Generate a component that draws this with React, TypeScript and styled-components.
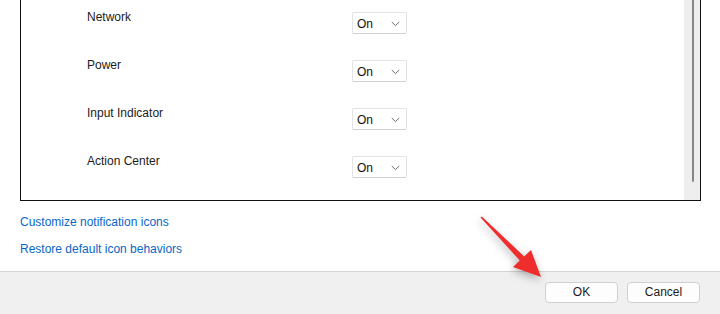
import React from "react";
import styled, { createGlobalStyle } from "styled-components";

const Global = createGlobalStyle`
  html, body { margin: 0; padding: 0; background: #ffffff; }
  body { font-family: "Liberation Sans", Arial, sans-serif; font-size: 12px; color: #1b1b1b; }
  * { box-sizing: border-box; }
`;

const Page = styled.div`
  position: relative;
  width: 720px;
  height: 314px;
  display: flex;
  flex-direction: column;
  overflow: hidden;
`;

const ListBox = styled.div`
  margin-left: 20px;
  width: 681px;
  height: 201px;
  border: 1px solid #111111;
  border-top: none;
  display: flex;
`;

const ListContent = styled.div`
  flex: 1;
  display: flex;
  flex-direction: column;
`;

const Row = styled.div`
  height: 48px;
  display: grid;
  grid-template-columns: 265px 55px;
  align-items: start;
  padding-left: 66px;
`;

const Label = styled.div`
  margin-top: 10px;
  line-height: 14px;
  color: #1b1b1b;
`;

const Select = styled.div`
  margin-top: 12px;
  height: 22px;
  width: 55px;
  border: 1px solid #e3e3e3;
  border-bottom-color: #cfcfcf;
  border-radius: 2px;
  background: #ffffff;
  display: flex;
  align-items: center;
  justify-content: space-between;
  padding: 1px 6px 0 4px;
  line-height: 14px;
  color: #111;
`;

const Chevron = styled.svg`
  width: 9px;
  height: 6px;
  display: block;
`;

const ScrollTrack = styled.div`
  width: 16px;
  background: #eeeeee;
  display: flex;
  justify-content: center;
`;

const ScrollThumb = styled.div`
  width: 2px;
  height: 182px;
  background: #868686;
  border-radius: 0 0 1px 1px;
  margin-left: 1px;
`;

const Links = styled.div`
  margin-left: 20px;
  padding-top: 14px;
  display: flex;
  flex-direction: column;
  gap: 13px;
  height: 70px;
`;

const Link = styled.a`
  color: #0a66c8;
  line-height: 14px;
  text-decoration: none;
  cursor: pointer;
`;

const Footer = styled.div`
  flex: 1;
  background: #f0f0f0;
  border-top: 1px solid #d4d4d4;
  display: flex;
  justify-content: flex-end;
  align-items: flex-start;
  gap: 9px;
  padding: 10px 20px 0 0;
`;

const Button = styled.button`
  width: 73px;
  height: 21px;
  border: 1px solid #d0d0d0;
  border-radius: 4px;
  background: #fdfdfd;
  font-family: inherit;
  font-size: 12px;
  color: #1b1b1b;
  padding: 0;
  line-height: 19px;
`;

const ArrowLayer = styled.svg`
  position: absolute;
  left: 0;
  top: 0;
  width: 720px;
  height: 314px;
  pointer-events: none;
  filter: drop-shadow(-1px 3px 4px rgba(0, 0, 0, 0.3));
`;

const items = ["Network", "Power", "Input Indicator", "Action Center"];

export default function App() {
  return (
    <>
      <Global />
      <Page>
        <ListBox>
          <ListContent>
            {items.map((name) => (
              <Row key={name}>
                <Label>{name}</Label>
                <Select>
                  <span>On</span>
                  <Chevron viewBox="0 0 9 6">
                    <path d="M0.8 1 L4.5 4.6 L8.2 1" fill="none" stroke="#6a6a6a" strokeWidth="1" />
                  </Chevron>
                </Select>
              </Row>
            ))}
          </ListContent>
          <ScrollTrack>
            <ScrollThumb />
          </ScrollTrack>
        </ListBox>
        <Links>
          <Link>Customize notification icons</Link>
          <Link>Restore default icon behaviors</Link>
        </Links>
        <Footer>
          <Button>OK</Button>
          <Button>Cancel</Button>
        </Footer>
        <ArrowLayer viewBox="0 0 720 314">
          <polygon
            points="480.5,217.6 481.8,216.4 524.2,256.5 531,250 541,277 513,267 519.8,260.5"
            fill="#ef2d2d"
          />
        </ArrowLayer>
      </Page>
    </>
  );
}
